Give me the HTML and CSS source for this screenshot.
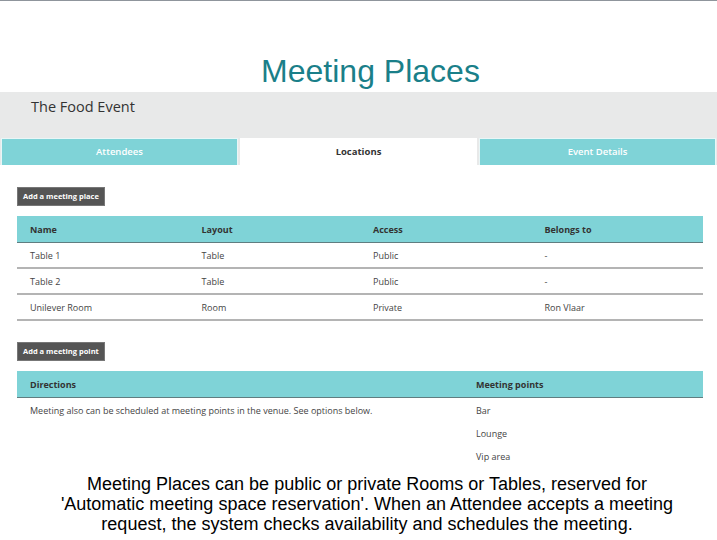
FILE: index.html
```html
<!DOCTYPE html>
<html>
<head>
<meta charset="utf-8">
<link rel="stylesheet" href="styles.css">
</head>
<body>
<h1 class="title">Meeting Places</h1>
<div class="event-bar">The Food Event</div>
<nav class="tabs">
  <div class="tab">Attendees</div>
  <div class="tab active">Locations</div>
  <div class="tab">Event Details</div>
</nav>
<main class="content">
  <button class="btn">Add a meeting place</button>
  <table class="grid places">
    <thead>
      <tr><th>Name</th><th>Layout</th><th>Access</th><th>Belongs to</th></tr>
    </thead>
    <tbody>
      <tr><td>Table 1</td><td>Table</td><td>Public</td><td>-</td></tr>
      <tr><td>Table 2</td><td>Table</td><td>Public</td><td>-</td></tr>
      <tr><td>Unilever Room</td><td>Room</td><td>Private</td><td>Ron Vlaar</td></tr>
    </tbody>
  </table>
  <button class="btn btn-point">Add a meeting point</button>
  <table class="grid points">
    <thead>
      <tr><th class="dir">Directions</th><th>Meeting points</th></tr>
    </thead>
    <tbody>
      <tr><td>Meeting also can be scheduled at meeting points in the venue. See options below.</td><td>Bar</td></tr>
      <tr><td></td><td>Lounge</td></tr>
      <tr><td></td><td>Vip area</td></tr>
    </tbody>
  </table>
</main>
<p class="caption">Meeting Places can be public or private Rooms or Tables, reserved for<br>'Automatic meeting space reservation'. When an Attendee accepts a meeting<br>request, the system checks availability and schedules the meeting.</p>
</body>
</html>
```
FILE: styles.css
```css
html, body {
  margin: 0;
  padding: 0;
  background: #ffffff;
}
body {
  border-top: 1px solid #8f959c;
  font-family: "Open Sans", "DejaVu Sans", sans-serif;
  color: #333333;
  width: 717px;
  height: 539px;
  overflow: hidden;
}
.title {
  margin: 0;
  padding: 52px 0 0 24px;
  height: 39px;
  box-sizing: content-box;
  text-align: center;
  font-family: "Liberation Sans", Arial, sans-serif;
  font-weight: normal;
  font-size: 32px;
  line-height: 36px;
  color: #1a7f89;
}
.event-bar {
  background: #e8e9e9;
  height: 46px;
  box-sizing: border-box;
  padding: 5px 0 0 31px;
  font-size: 14.5px;
  line-height: 20px;
  color: #333;
}
.tabs {
  display: flex;
  gap: 2px;
  padding: 0 1px;
  background: #e8e9e9;
  height: 27px;
}
.tab {
  flex: 1;
  background: #7fd3d7;
  color: #ffffff;
  font-size: 9.5px;
  font-weight: 600;
  text-align: center;
  line-height: 25px;
  border: 1px solid #e9f6f7;
  border-bottom: 0;
}
.tab.active {
  background: #ffffff;
  color: #333;
  font-weight: 700;
  border-color: #ffffff;
}
.content {
  padding: 22px 14px 0 17px;
}
.btn {
  display: block;
  margin: 0;
  padding: 0 5px;
  height: 19px;
  border: 1px solid #777;
  background: #555555;
  color: #ffffff;
  font-family: "Open Sans", "DejaVu Sans", sans-serif;
  font-size: 7.5px;
  font-weight: 700;
  line-height: 17px;
}
.btn-point {
  margin-top: 21px;
}
.grid {
  width: 686px;
  margin-top: 10px;
  border-collapse: collapse;
  table-layout: fixed;
  font-size: 9px;
}
.grid th {
  background: #7fd3d7;
  text-align: left;
  font-weight: 700;
  height: 26px;
  padding: 0 0 0 13px;
  border-bottom: 1px solid #607d80;
  color: #333;
}
.places td {
  height: 24px;
  padding: 0 0 0 13px;
  border-bottom: 2px solid #b4b4b4;
  color: #444;
}
.points th.dir {
  width: 433px;
}
.points td {
  height: 23px;
  padding: 0 0 0 13px;
  color: #444;
}
.points tbody tr:first-child td {
  height: 24px;
}
.caption {
  margin: 6px 0 0 17px;
  text-align: center;
  font-family: "Liberation Sans", Arial, sans-serif;
  font-size: 18px;
  line-height: 20px;
  color: #000;
}
```
